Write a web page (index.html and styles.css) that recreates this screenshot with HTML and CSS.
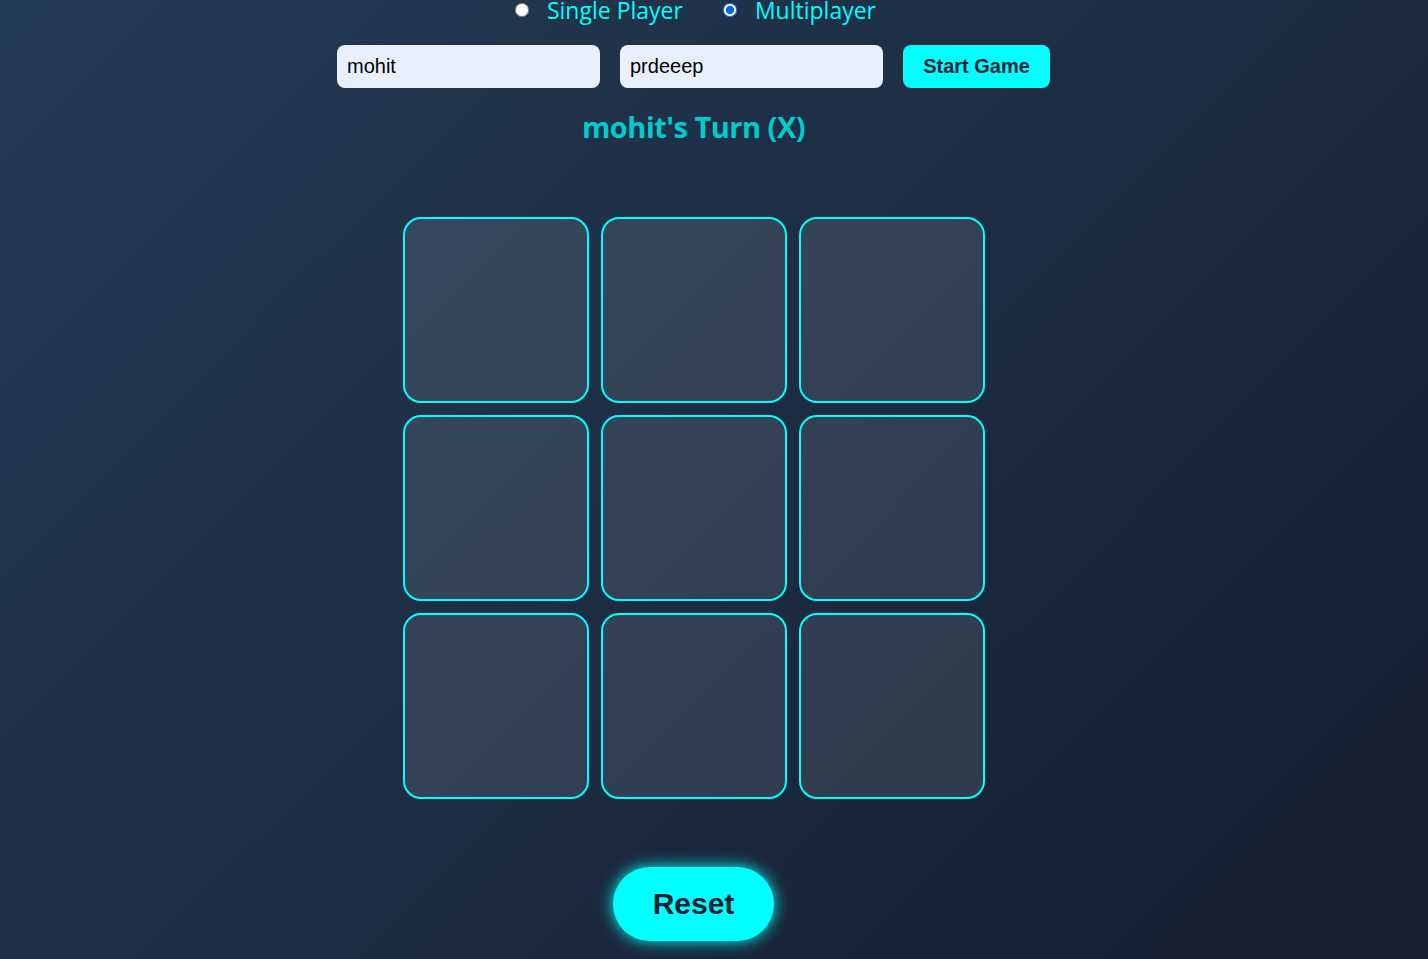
FILE: index.html
```html
<!DOCTYPE html>
<html>
<head>
<meta charset="utf-8">
<title>Tic Tac Toe</title>
<link rel="stylesheet" href="styles.css">
</head>
<body>
<main class="app">
  <div class="mode">
    <label class="mode-opt"><input type="radio" name="mode"><span>Single Player</span></label>
    <label class="mode-opt"><input type="radio" name="mode" checked><span>Multiplayer</span></label>
  </div>
  <div class="players">
    <input class="name" type="text" value="mohit">
    <input class="name" type="text" value="prdeeep">
    <button class="start">Start Game</button>
  </div>
  <h2 class="turn">mohit's Turn (X)</h2>
  <div class="board">
    <div class="cell"></div><div class="cell"></div><div class="cell"></div>
    <div class="cell"></div><div class="cell"></div><div class="cell"></div>
    <div class="cell"></div><div class="cell"></div><div class="cell"></div>
  </div>
  <button class="reset">Reset</button>
</main>
</body>
</html>
```
FILE: styles.css
```css
html, body {
  margin: 0;
  height: 100%;
}
body {
  background: linear-gradient(135deg, #243b55 0%, #141e30 100%);
  font-family: "Open Sans", "Noto Sans", sans-serif;
  overflow: hidden;
}
.app {
  display: flex;
  flex-direction: column;
  align-items: center;
  padding-right: 41px;
}
.mode {
  display: flex;
  align-items: center;
  gap: 40px;
  margin-top: -7px;
  margin-left: 4px;
  height: 34px;
}
.mode-opt {
  display: flex;
  align-items: center;
  color: #00ffff;
  font-size: 23px;
  font-family: "Open Sans", sans-serif;
}
.mode-opt input {
  width: 14px;
  height: 14px;
  margin: 0 18px 0 0;
  accent-color: #0b64e6;
}
.players {
  display: flex;
  gap: 20px;
  margin-top: 18px;
}
.name {
  box-sizing: border-box;
  width: 263px;
  height: 43px;
  border: none;
  border-radius: 8px;
  background: #e8f0fe;
  padding: 0 10px;
  font-family: "Liberation Sans", Arial, sans-serif;
  font-size: 20px;
  color: #000;
  outline: none;
}
.start {
  box-sizing: border-box;
  width: 147px;
  height: 43px;
  border: none;
  border-radius: 8px;
  background: #00ffff;
  color: #1b2638;
  font-family: "Liberation Sans", Arial, sans-serif;
  font-weight: bold;
  font-size: 20px;
  cursor: pointer;
}
.turn {
  margin: 20px 0 0;
  height: 38px;
  line-height: 38px;
  color: #00cccc;
  font-size: 29px;
  font-weight: bold;
  font-family: "Open Sans", sans-serif;
  letter-spacing: -0.5px;
}
.board {
  display: grid;
  grid-template-columns: repeat(3, 186px);
  grid-auto-rows: 186px;
  gap: 12px;
  margin-top: 71px;
}
.cell {
  box-sizing: border-box;
  border: 2px solid #00ffff;
  border-radius: 18px;
  background: rgba(255, 255, 255, 0.1);
}
.reset {
  margin-top: 68px;
  box-sizing: border-box;
  width: 161px;
  height: 74px;
  border: none;
  border-radius: 37px;
  background: #00ffff;
  color: #172233;
  font-family: "Liberation Sans", Arial, sans-serif;
  font-weight: bold;
  font-size: 30px;
  box-shadow: 0 0 15px #00ffff;
  cursor: pointer;
}
```
